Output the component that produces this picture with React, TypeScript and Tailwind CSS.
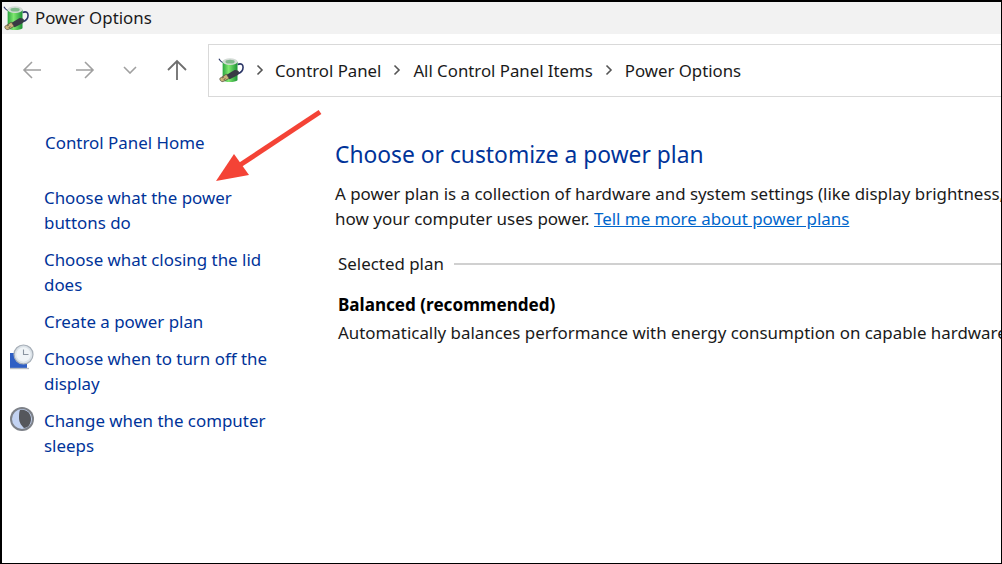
const sans = "font-['Noto_Sans','Open_Sans',sans-serif]";

function BatteryIcon({ size }: { size: number }) {
  return (
    <svg width={size} height={size} viewBox="0 0 28 28" className="shrink-0">
      <defs>
        <linearGradient id="batt" x1="0" x2="1" y1="0" y2="0">
          <stop offset="0" stopColor="#2aa53f" />
          <stop offset="0.4" stopColor="#7fe86f" />
          <stop offset="1" stopColor="#1c9236" />
        </linearGradient>
      </defs>
      {/* cable */}
      <path d="M1 2c1 2 2 3 4 4" fill="none" stroke="#2a3566" strokeWidth="1.200" />
      <path d="M21 8c4-1.500 6 0 6 3s-2.500 6-6 7" fill="none" stroke="#2a3566" strokeWidth="1.700" />
      {/* cell */}
      <path d="M5 5h16v20c-2 2.500-14 2.500-16 0z" fill="url(#batt)" />
      <ellipse cx="13" cy="5" rx="8" ry="3.600" fill="#d4dbd6" />
      <ellipse cx="13" cy="5" rx="5" ry="2" fill="#7fb98a" />
      {/* plug */}
      <path d="M8 20l9-5.500c2-1 5 0 5.500 1.500.5 2-1 3.500-3 4.500l-7 3.500z" fill="#383b44" />
      <path d="M2 23l7-4.500 3 4.500-6.500 3.500c-2 .5-4-1.500-3.500-3.500z" fill="#c9b27a" stroke="#4a4636" strokeWidth="0.700" />
      <path d="M4.500 22.500l2-1.200M6 24.500l2-1.200" stroke="#4a4636" strokeWidth="0.900" />
    </svg>
  );
}

function ClockIcon() {
  return (
    <svg width="26" height="26" viewBox="0 0 26 26" className="shrink-0">
      <path d="M1 9h17v15H1z" fill="#2f5fc4" />
      <path d="M1 24.500h19" stroke="#b8bcc2" strokeWidth="1.400" />
      <circle cx="14.500" cy="10.500" r="9.500" fill="#dbe2e8" stroke="#a7afb8" strokeWidth="1.200" />
      <circle cx="14.500" cy="10.500" r="7.200" fill="#f0f4f7" />
      <path d="M14.500 5.500v5h5" fill="none" stroke="#8a94a0" strokeWidth="1.100" />
    </svg>
  );
}

function MoonIcon() {
  return (
    <svg width="26" height="26" viewBox="0 0 26 26" className="shrink-0">
      <circle cx="13" cy="13" r="12" fill="#7d8188" />
      <circle cx="13" cy="13" r="10" fill="#c3d3f2" />
      <path d="M11 4c5-1.500 11 2 11 9 0 5-3 9-7 9-2-2-5-5-5-10 0-3 0-6 1-8z" fill="#55575c" />
    </svg>
  );
}

function SideLink({ label, icon }: { label: React.ReactNode; icon?: React.ReactNode }) {
  return (
    <div className="relative pl-[42px] pr-2 leading-[25px] text-[16.9px] text-[#003399]">
      {icon && <span className="absolute left-[7px] top-[-2px]">{icon}</span>}
      {label}
    </div>
  );
}

function Chevron() {
  return (
    <svg width="8" height="12" viewBox="0 0 8 12" className="mx-[12px] shrink-0" fill="none" stroke="#555" strokeWidth="1.600">
      <path d="M1.500 1.500L6 6l-4.500 4.500" />
    </svg>
  );
}

export default function App() {
  return (
    <div className={`relative w-[1002px] h-[564px] overflow-hidden bg-white border-t-2 border-l-2 border-r border-b border-black ${sans}`}>
      {/* title bar */}
      <div className="h-8 bg-[#f2f2f2] flex items-center gap-[6px] pl-[1px]">
        <BatteryIcon size={26} />
        <span className="text-[16.85px] text-[#1a1a1a]">Power Options</span>
      </div>

      {/* nav row */}
      <div className="flex items-center h-[52px] mt-[10px]">
        <div className="w-[206px] flex items-center shrink-0 text-[#a0a0a0]">
          <svg width="20" height="20" viewBox="0 0 20 20" className="ml-[20px]" fill="none" stroke="currentColor" strokeWidth="1.600">
            <path d="M19 10H2M10 2l-8 8 8 8" />
          </svg>
          <svg width="20" height="20" viewBox="0 0 20 20" className="ml-[33px]" fill="none" stroke="currentColor" strokeWidth="1.600">
            <path d="M1 10h17M10 2l8 8-8 8" />
          </svg>
          <svg width="14" height="8" viewBox="0 0 14 8" className="ml-[28px]" fill="none" stroke="currentColor" strokeWidth="1.600">
            <path d="M1 1l6 6 6-6" />
          </svg>
          <svg width="22" height="22" viewBox="0 0 22 22" className="ml-[29px] text-[#6e6e6e]" fill="none" stroke="currentColor" strokeWidth="1.800">
            <path d="M11 21V2M2 11l9-9 9 9" />
          </svg>
        </div>
        <div className="flex-1 h-[53px] border border-r-0 border-[#d9d9d9] flex items-center pl-[9px] whitespace-nowrap text-[16.8px] text-[#1a1a1a]">
          <BatteryIcon size={26} />
          <Chevron />
          <span className="ml-[-1px] pt-px">Control Panel</span>
          <Chevron />
          <span className="pt-px">All Control Panel Items</span>
          <Chevron />
          <span className="pt-px">Power Options</span>
        </div>
      </div>

      <div className="flex">
        {/* sidebar */}
        <div className="w-[306px] shrink-0 pt-[34px]">
          <div className="pl-[43px] leading-[25px] text-[16.9px] text-[#003399]">Control Panel Home</div>
          <div className="flex flex-col gap-3 mt-[30px]">
            <SideLink label={<>Choose what the power<br />buttons do</>} />
            <SideLink label={<>Choose what closing the lid<br />does</>} />
            <SideLink label="Create a power plan" />
            <SideLink label={<>Choose when to turn off the<br />display</>} icon={<ClockIcon />} />
            <SideLink label={<>Change when the computer<br />sleeps</>} icon={<MoonIcon />} />
          </div>
        </div>

        {/* main */}
        <div className="flex-1 min-w-0 pl-[27px] pt-[43px] overflow-hidden whitespace-nowrap">
          <h1 className="text-[22.8px] leading-8 text-[#003399]">Choose or customize a power plan</h1>
          <p className="mt-[10px] text-[16.9px] leading-[25px] text-[#1a1a1a]">
            A power plan is a collection of hardware and system settings (like display brightness,
            <br />
            <span className="text-[17px]">how your computer uses power. </span>
            <span className="text-[#0066cc] underline">Tell me more about power plans</span>
          </p>
          <div className="flex items-center mt-[20px] pl-[3px] text-[16.9px] leading-[25px] text-[#1a1a1a]">
            <span>Selected plan</span>
            <div className="flex-1 h-[2px] bg-[#d0d0d0] ml-[10px]" />
          </div>
          <div className="mt-[16px] pl-[3px] text-[17.1px] leading-[25px] font-bold text-black">Balanced (recommended)</div>
          <div className="mt-[3px] pl-[3px] text-[16.9px] leading-[25px] text-[#1a1a1a]">
            Automatically balances performance with energy consumption on capable hardware
          </div>
        </div>
      </div>

      {/* annotation arrow */}
      <svg className="absolute left-[-2px] top-[-2px] pointer-events-none" width="1002" height="564" viewBox="0 0 1002 564">
        <path d="M320 112L240 165" stroke="#f44336" strokeWidth="5" />
        <path d="M216 181L234 154L249 175z" fill="#f44336" />
      </svg>
    </div>
  );
}
